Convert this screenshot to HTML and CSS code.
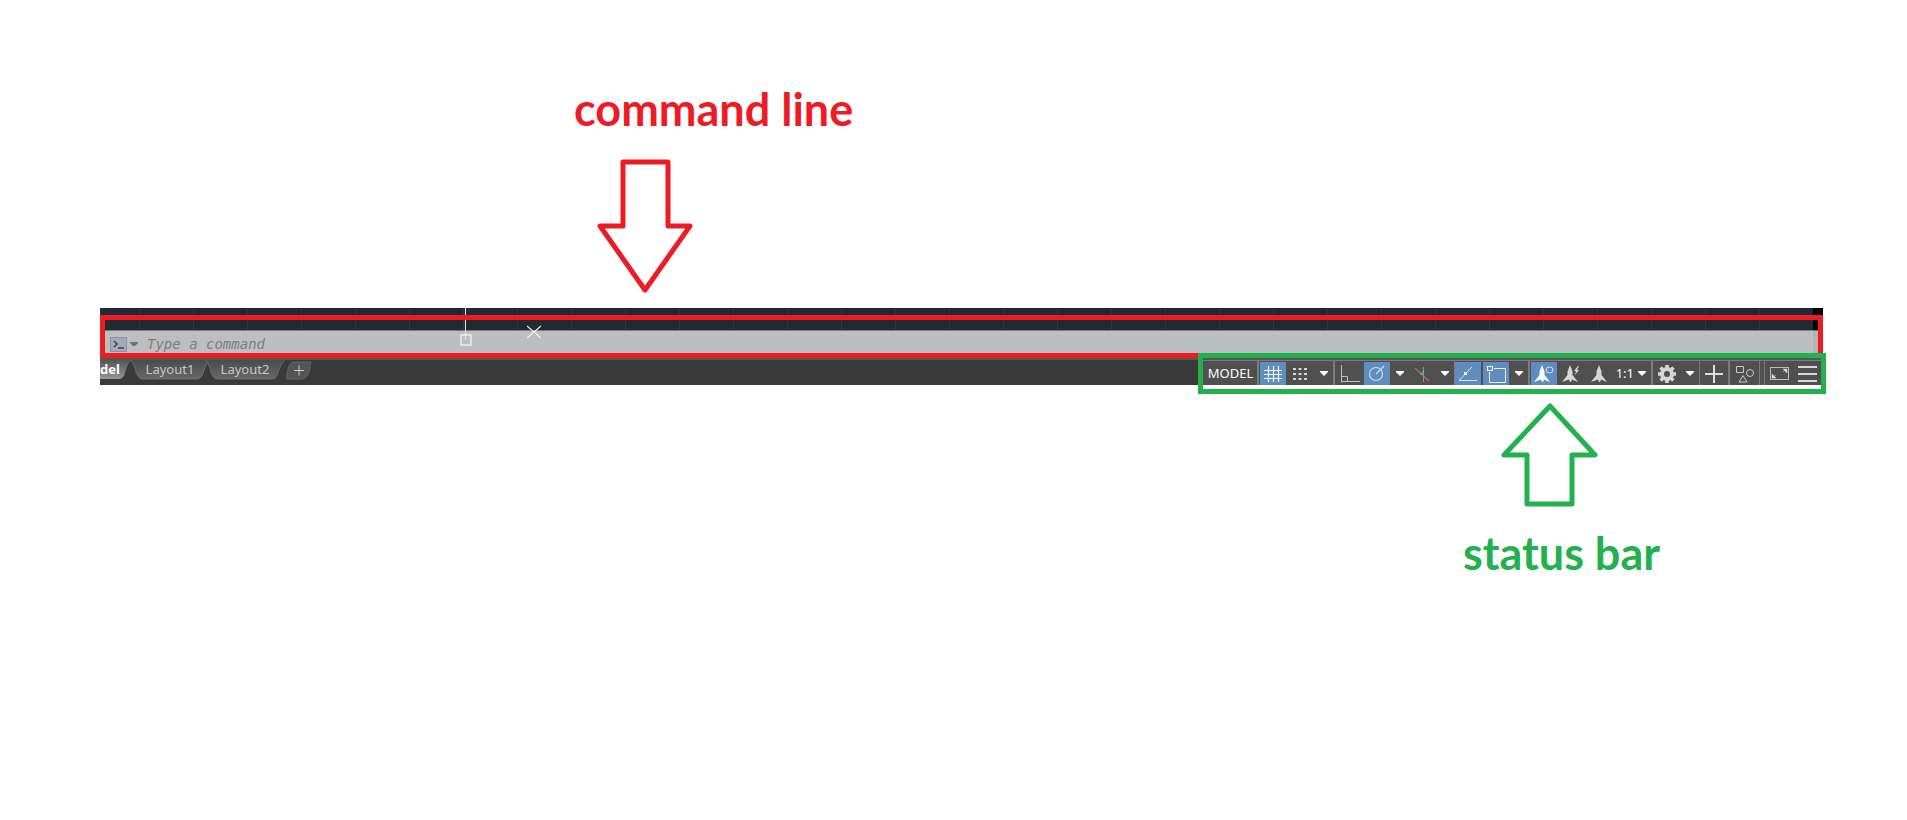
FILE: index.html
```html
<!DOCTYPE html>
<html lang="en">
<head>
<meta charset="utf-8">
<title>Command line and status bar</title>
<link rel="stylesheet" href="styles.css">
</head>
<body>
<main class="page">
  <section class="callout callout-command">
    <h2 class="callout-title">command line</h2>
    <svg class="arrow-down" width="96" height="136" viewBox="0 0 96 136" aria-hidden="true"><path d="M26 4H71V68H93L48 132L3 68H26Z"/></svg>
  </section>

  <section class="window">
    <div class="command-frame">
      <div class="canvas-strip"></div>
      <form class="command-bar">
        <button type="button" class="prompt" aria-label="Customize">
          <svg width="17" height="15" viewBox="0 0 17 15"><rect x=".5" y=".5" width="16" height="14" fill="#a3abb6" stroke="#8c939c"/><path d="M4 4l3 3-3 3M8 11h6" fill="none" stroke="#3c4450" stroke-width="1.6"/></svg>
        </button>
        <button type="button" class="recent" aria-label="Recent commands">
          <svg width="8" height="5" viewBox="0 0 8 5"><path d="M0 0h8v1L5 4H3L0 1z" fill="#6d6f71"/></svg>
        </button>
        <input class="command-input" type="text" placeholder="Type a command" aria-label="Command">
      </form>
    </div>
    <svg class="cursor" width="14" height="38" viewBox="0 0 14 38" aria-hidden="true"><path d="M5.500 0V7M5.500 12V32" stroke="#dfe9e4"/><rect x="1" y="27" width="10" height="10" fill="none" stroke="#f4f4f4" stroke-width="1.300"/></svg>
    <svg class="cross" width="14" height="14" viewBox="0 0 14 14" aria-hidden="true"><path d="M0 1L14 13M14 1L0 13" stroke="#f1f1f1" stroke-width="1.200"/></svg>

    <footer class="bottom-bar">
      <nav class="tabs">
        <button type="button" class="tab active"><svg class="tab-shape" width="32" height="20" viewBox="0 0 32 20"><path d="M0 0H32C28 3 27 7 25 13C24 17 22 19 18 19H0Z" fill="url(#on)"/></svg><span>del</span></button>
        <button type="button" class="tab"><svg class="tab-shape" width="80" height="20" viewBox="0 0 80 20"><path d="M1 0H80C76 3 75 7 73 13C72 17 70 19 66 19H14C9 19 8 17 6 12C5 7 3 3 1 0Z" fill="url(#off)"/><path d="M1 0C3 3 5 7 6 12C8 17 9 19 14 19H66C70 19 72 17 73 13C75 7 76 3 80 0" fill="none" stroke="#6e6e6e"/></svg><span>Layout1</span></button>
        <button type="button" class="tab"><svg class="tab-shape" width="80" height="20" viewBox="0 0 80 20"><path d="M1 0H80C76 3 75 7 73 13C72 17 70 19 66 19H14C9 19 8 17 6 12C5 7 3 3 1 0Z" fill="url(#off)"/><path d="M1 0C3 3 5 7 6 12C8 17 9 19 14 19H66C70 19 72 17 73 13C75 7 76 3 80 0" fill="none" stroke="#6e6e6e"/></svg><span>Layout2</span></button>
        <button type="button" class="tab-add" aria-label="New layout"><svg width="28" height="19" viewBox="0 0 28 19">
          <defs>
            <linearGradient id="off" x2="0" y2="1"><stop stop-color="#4b4b4b"/><stop offset="1" stop-color="#686868"/></linearGradient>
            <linearGradient id="on" x2="0" y2="1"><stop stop-color="#555"/><stop offset="1" stop-color="#969696"/></linearGradient>
          </defs>
          <path d="M8 1H26C25 4 25 7 24 11C22 16 20 18 16 18H3C1 18 1 17 2 14C3 7 4 3 8 1Z" fill="#545454" stroke="#686868"/><path d="M9 9.500h10M14 4.500v10" stroke="#d0d0d0"/></svg></button>
      </nav>

      <div class="status-bar">
        <div class="group"><button type="button" class="model">MODEL</button></div>
        <div class="group">
          <button type="button" class="tool on" aria-label="Grid"><svg width="18" height="18" viewBox="0 0 18 18"><path d="M0 5.500h18M0 9.500h18M0 13.500h18M4.500 1v16M9.500 1v16M14.500 1v16" stroke="#f2f7fc" stroke-width="1.200"/></svg></button>
          <button type="button" class="tool wide" aria-label="Snap"><svg width="14" height="14" viewBox="0 0 14 14"><path d="M0 2h14M0 7h14M0 12h14" stroke="#d6d6d6" stroke-width="2" stroke-dasharray="3 2.500"/></svg></button>
          <button type="button" class="drop" aria-label="Snap options"><svg width="8" height="5" viewBox="0 0 8 5"><path d="M0 0h8v1L4 5 0 1z"/></svg></button>
        </div>
        <div class="group">
          <button type="button" class="tool wide" aria-label="Ortho"><svg width="20" height="18" viewBox="0 0 20 18"><path d="M1.500 0V17.500M1.500 16.500H20M1.500 11.500H7.500V16" fill="none" stroke="#bdbdbd"/></svg></button>
          <button type="button" class="tool on" aria-label="Polar tracking"><svg width="18" height="18" viewBox="0 0 18 18"><circle cx="8" cy="9" r="6.500" fill="none" stroke="#c6dcf1" stroke-width="1.200"/><path d="M8 9L16 1" stroke="#c6dcf1" stroke-width="1.200"/></svg></button>
          <button type="button" class="drop" aria-label="Polar options"><svg width="8" height="5" viewBox="0 0 8 5"><path d="M0 0h8v1L4 5 0 1z"/></svg></button>
          <button type="button" class="tool" aria-label="Isometric drafting"><svg width="16" height="16" viewBox="0 0 16 16"><path d="M1 2L15 15" stroke="#b96763" stroke-width="1.300"/><path d="M9.500 1V16" stroke="#62b077"/><path d="M6 8h3V5" fill="none" stroke="#aaa"/></svg></button>
          <button type="button" class="drop" aria-label="Isometric options"><svg width="8" height="5" viewBox="0 0 8 5"><path d="M0 0h8v1L4 5 0 1z"/></svg></button>
        </div>
        <div class="group joined">
          <button type="button" class="tool on" aria-label="Object snap tracking"><svg width="18" height="16" viewBox="0 0 18 16"><path d="M0 14.500L13 1M0 14.500H18" stroke="#d4e4f4"/><rect x="5" y="6" width="3" height="3" fill="#fff"/></svg></button>
          <button type="button" class="tool on spaced" aria-label="Object snap"><svg width="19" height="18" viewBox="0 0 19 18"><path d="M7 3.500H18.500V17.500H2.500V7" fill="none" stroke="#e8f1fa"/><rect x=".5" y="1.500" width="5" height="4" fill="none" stroke="#fff"/></svg></button>
          <button type="button" class="drop" aria-label="Object snap options"><svg width="8" height="5" viewBox="0 0 8 5"><path d="M0 0h8v1L4 5 0 1z"/></svg></button>
        </div>
        <div class="group">
          <button type="button" class="tool on" aria-label="Annotation visibility"><svg width="20" height="18" viewBox="0 0 20 18"><path d="M8 0L10.500 6.500V10L16 17L10 14.500L9 17H8L7 14.500L0 17L5.500 10V6.500Z" fill="#fff"/><ellipse cx="15.500" cy="5" rx="3.500" ry="3" fill="none" stroke="#dce9f6"/></svg></button>
          <button type="button" class="tool wide" aria-label="Auto scale"><svg width="18" height="18" viewBox="0 0 18 18"><path d="M8 0L10.500 6.500V10L16 17L10 14.500L9 17H8L7 14.500L0 17L5.500 10V6.500Z" fill="#d6d6d6"/><path d="M16 1L12 6h2l-1 4 4-5h-2l2-4z" fill="#d6d6d6"/></svg></button>
          <button type="button" class="tool wide" aria-label="Annotation scale"><svg width="16" height="18" viewBox="0 0 16 18"><path d="M8 0L10.500 6.500V10L16 17L10 14.500L9 17H8L7 14.500L0 17L5.500 10V6.500Z" fill="#d6d6d6"/></svg></button>
          <button type="button" class="scale">1:1<svg width="8" height="5" viewBox="0 0 8 5"><path d="M0 0h8v1L4 5 0 1z"/></svg></button>
        </div>
        <div class="group">
          <button type="button" class="tool" aria-label="Workspace"><svg width="18" height="18" viewBox="0 0 18 18"><circle cx="9" cy="9" r="5" fill="none" stroke="#d6d6d6" stroke-width="4"/><path d="M9 0v3M9 15v3M0 9h3M15 9h3M2.600 2.600l2 2M13.400 13.400l2 2M15.400 2.600l-2 2M4.600 13.400l-2 2" stroke="#d6d6d6" stroke-width="3.600"/></svg></button>
          <button type="button" class="drop" aria-label="Workspace options"><svg width="8" height="5" viewBox="0 0 8 5"><path d="M0 0h8v1L4 5 0 1z"/></svg></button>
        </div>
        <div class="group joined"><button type="button" class="tool wide" aria-label="Annotation monitor"><svg width="18" height="18" viewBox="0 0 18 18"><path d="M0 9h18M9 0v18" stroke="#dedede" stroke-width="2"/></svg></button></div>
        <div class="group"><button type="button" class="tool wide" aria-label="Isolate objects"><svg width="20" height="18" viewBox="0 0 20 18"><path d="M1.500 1.500h7v6h-7zM8 10.500L12 17H4Z" fill="none" stroke="#c8c8c8"/><circle cx="15" cy="8" r="3.500" fill="none" stroke="#c8c8c8"/></svg></button></div>
        <div class="group blank"></div>
        <div class="group last">
          <button type="button" class="tool wide" aria-label="Clean screen"><svg width="19" height="13" viewBox="0 0 19 13"><rect x=".5" y=".5" width="18" height="12" fill="none" stroke="#bdbdbd"/><path d="M13 2h4v4zM2 7v4h4zM13 5l2-2M6 8l-3 2" fill="#d6d6d6" stroke="#d6d6d6" stroke-width=".5"/></svg></button>
          <button type="button" class="tool wide" aria-label="Customization"><svg width="19" height="16" viewBox="0 0 19 16"><path d="M0 1h19M0 8h19M0 15h19" stroke="#d8d8d8" stroke-width="2"/></svg></button>
        </div>
      </div>
    </footer>
  </section>

  <section class="callout callout-status">
    <svg class="arrow-up" width="98" height="106" viewBox="0 0 98 106" aria-hidden="true"><path d="M27 102V53H4L50 4L95 53H72V102Z"/></svg>
    <h2 class="callout-title">status bar</h2>
  </section>
</main>
</body>
</html>
```
FILE: styles.css
```css
* { box-sizing: border-box; }
body { margin: 0; background: #fff; }
.page { padding: 82px 84px 40px 100px; }

button { margin: 0; padding: 0; border: 0; background: none; color: inherit; font: inherit; }
svg { display: block; flex: none; }

.callout { display: flex; flex-direction: column; align-items: flex-start; }
.callout-title { margin: 0; font: 700 45px/54px Lato, "Open Sans", sans-serif; white-space: nowrap; }
.callout-command { margin-left: 474px; color: #ed1c24; }
.callout-status { width: 360px; margin-left: auto; padding-top: 17px; color: #22b14c; }
.arrow-down, .arrow-up { fill: none; stroke: currentColor; stroke-width: 5; stroke-linejoin: round; }
.arrow-down { margin: 22px 0 14px 23px; }
.arrow-up { margin: 0 0 18px 37px; }

.window {
  position: relative;
  padding-top: 7px;
  background:
    linear-gradient(#000, #000) right top / 10px 23px no-repeat,
    repeating-linear-gradient(90deg, transparent 0 39px, #2c3541 39px 40px, transparent 40px 54px),
    #212a33;
}
.command-frame { border: 5px solid #ed1c24; }
.canvas-strip { height: 10px; }
.command-bar {
  display: flex;
  align-items: center;
  height: 23px;
  padding: 4px 0 0 5px;
  border-top: 1px solid #77797b;
  background: linear-gradient(#b2b3b4, #b2b3b4) right / 5px 100% no-repeat, #bdbec0;
}
.recent { width: 16px; padding-left: 3px; }
.command-input {
  flex: 1;
  min-width: 0;
  padding: 0 4px;
  border: 0;
  outline: 0;
  background: none;
  color: #333;
  font: italic 14px/18px "DejaVu Sans Mono", "Liberation Mono", monospace;
}
.command-input::placeholder { color: #7b7c7d; opacity: 1; }
.cursor { position: absolute; left: 360px; top: 0; }
.cross { position: absolute; left: 427px; top: 17px; }

.bottom-bar { display: flex; align-items: flex-start; height: 27px; background: #3a3a3a; border-top: 2px solid #55565a; }
.tabs { display: flex; height: 21px; font: 14px/18px "Noto Sans", "Open Sans", sans-serif; color: #c8c8c8; }
.tab { position: relative; display: flex; justify-content: center; width: 75px; height: 20px; padding-left: 5px; }
.tab.active { justify-content: flex-start; width: 30px; padding: 0; color: #fff; font-size: 13px; font-weight: 700; }
.tab-shape { position: absolute; left: 0; top: 0; }
.tab span { position: relative; }
.tab:not(.active) { font-size: 13px; }
.tab-add { margin-left: 5px; }

.status-bar {
  position: relative;
  display: flex;
  flex: none;
  height: 41px;
  margin: -7px -3px 0 auto;
  padding-bottom: 4px;
  border: 5px solid #22b14c;
  background: linear-gradient(#55565a 0 2px, #505050 2px 27px, #fff 27px);
  color: #fff;
  font: 13px/23px "Noto Sans", "Open Sans", sans-serif;
}
.group { display: flex; margin-top: 2px; padding: 1px 0 0 1px; border: 1px solid #7c7c7c; border-width: 1px 1px 0 1px; }
.group:first-child { border-left: 0; }
.group.joined { padding-left: 0; border-left: 0; }
.group.last { padding-left: 0; border-right: 0; }
.group.blank { width: 4px; border-width: 1px 0 0; }
.model { width: 53px; }
.tool { display: flex; align-items: center; justify-content: center; width: 26px; height: 23px; }
.tool.wide { width: 28px; }
.tool.on { background: #5f8dc0; }
.tool.spaced { margin-left: 2px; }
.drop { display: flex; align-items: center; justify-content: center; width: 19px; }
.drop svg, .scale svg { fill: #fff; }
.scale { display: flex; align-items: center; justify-content: flex-end; gap: 4px; width: 38px; padding-right: 5px; }
```
